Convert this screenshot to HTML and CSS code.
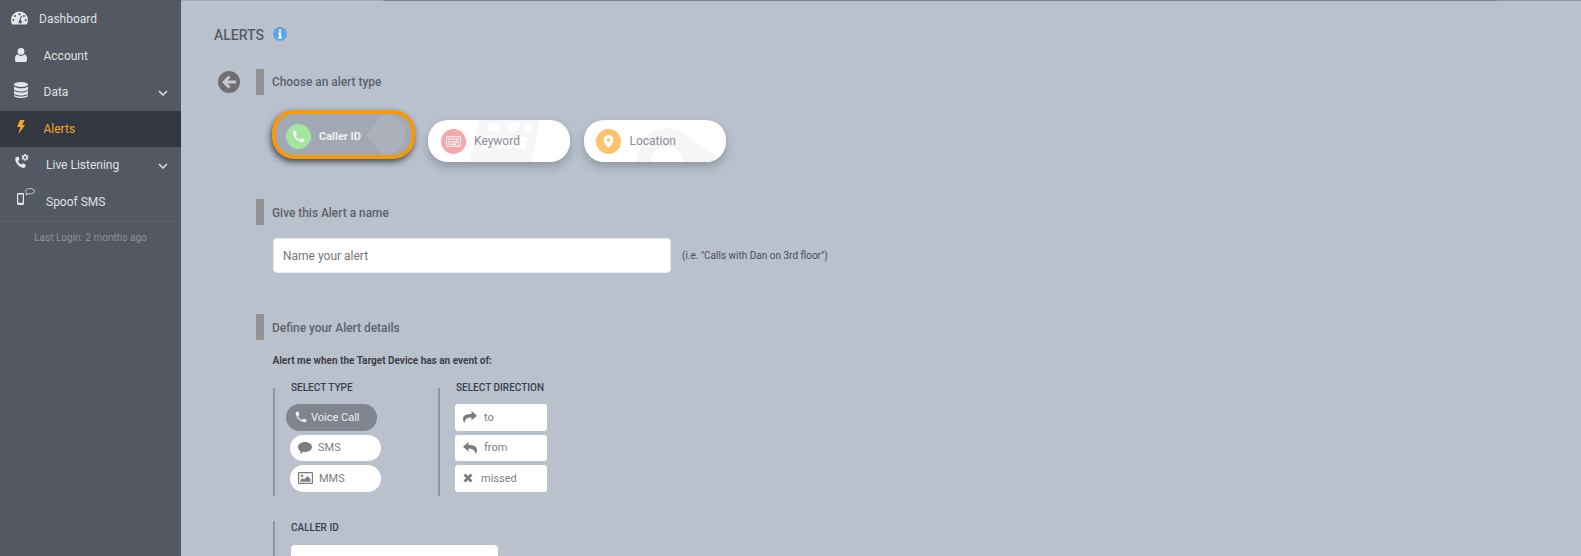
FILE: index.html
```html
<!DOCTYPE html>
<html lang="en">
	<head>
		<meta name="viewport" content="width=device-width, initial-scale=1.0" />
		<title>Alerts</title>
		<link rel="stylesheet" href="styles.css">
	</head>
	<body>
		<svg class="sprite" aria-hidden="true">
			<symbol id="i-phone" viewBox="0 0 24 24"><path d="M6.6 10.8c1.4 2.8 3.8 5.1 6.6 6.6l2.2-2.2c.3-.3.7-.4 1-.2 1.1.4 2.3.6 3.6.6.6 0 1 .4 1 1V20c0 .6-.4 1-1 1C10.6 21 3 13.4 3 4c0-.6.4-1 1-1h3.5c.6 0 1 .4 1 1 0 1.2.2 2.4.6 3.6.1.3 0 .7-.2 1z"/></symbol>
		</svg>

		<aside class="sidebar">
			<ul class="nav">
				<li class="nav-item -narrow">
					<svg class="nav-icon" viewBox="0 0 18 14"><path fill-rule="evenodd" d="M9 0a9 9 0 0 0-9 9c0 1.900.6 3.500 1.500 5h15c.9-1.500 1.500-3.100 1.500-5a9 9 0 0 0-9-9zM9 1.800a1.100 1.100 0 1 1 0 2.200 1.100 1.100 0 0 1 0-2.200zM4.300 3.700a1.100 1.100 0 1 1 0 2.200 1.100 1.100 0 0 1 0-2.200zM2.400 8a1.100 1.100 0 1 1 0 2.200 1.100 1.100 0 0 1 0-2.200zM15.600 8a1.100 1.100 0 1 1 0 2.200 1.100 1.100 0 0 1 0-2.200zM13.700 3.700a1.100 1.100 0 1 1 0 2.200 1.100 1.100 0 0 1 0-2.200zM11.500 4.800l-1.300 4.600a1.700 1.700 0 1 1-2.100 1.500 1.700 1.700 0 0 1 1-1.700l1.300-4.700z"/></svg>
					<span>Dashboard</span>
				</li>
				<li class="nav-item">
					<svg class="nav-icon -user" viewBox="0 0 12 14"><path d="M6 0a3.400 3.400 0 1 1 0 6.800A3.400 3.400 0 0 1 6 0zM2.600 6.600C3.500 7.500 4.700 8 6 8s2.500-.5 3.400-1.400C11 6.800 12 8 12 10.500V12c0 1.200-.8 2-2 2H2c-1.200 0-2-.8-2-2v-1.500C0 8 1 6.800 2.600 6.600z"/></svg>
					<span>Account</span>
				</li>
				<li class="nav-item">
					<svg class="nav-icon -data" viewBox="0 0 14 16"><ellipse cx="7" cy="2.500" rx="7" ry="2.500"/><path d="M0 4.300C1 5.700 4 6.300 7 6.300s6-.6 7-2V7c0 1.400-3.100 2.500-7 2.500S0 8.400 0 7zM0 8.500c1 1.400 4 2 7 2s6-.6 7-2v2.600c0 1.400-3.100 2.500-7 2.500s-7-1.100-7-2.500zM0 12.600c1 1.400 4 2 7 2s6-.6 7-2v.9C14 14.900 10.900 16 7 16s-7-1.100-7-2.500z"/></svg>
					<span>Data</span>
					<svg class="chevron" viewBox="0 0 10 6"><path d="M1 1l4 4 4-4" /></svg>
				</li>
				<li class="nav-item -active">
					<svg class="nav-icon -bolt" viewBox="0 0 8 14"><path d="M3 0h4.500L5.300 5H8L1.500 14l1.800-7H0z"/></svg>
					<span>Alerts</span>
				</li>
				<li class="nav-item -wide">
					<svg class="nav-icon -live" viewBox="0 0 15 15"><path d="M2.200 3.200l1.600-.6c.4-.1.700 0 .8.400l.8 2.200c.1.300 0 .6-.2.800l-1.100.9c.6 1.600 1.800 2.900 3.300 3.700l1.100-1c.3-.2.600-.3.900-.1l2 1.100c.3.200.4.500.3.900l-.6 1.600c-.3.700-1 1-1.700.9C5 12.900 1.400 9 1.200 4.900c0-.8.300-1.400 1-1.700z"/><path fill-rule="evenodd" d="M10.300 0h1.400l.2 1c.3.100.5.200.8.400l1-.4.700 1.200-.8.700c.1.300.1.600 0 .9l.8.700-.7 1.200-1-.4c-.3.200-.5.300-.8.400l-.2 1h-1.400l-.2-1c-.3-.1-.5-.2-.8-.4l-1 .4-.7-1.200.8-.7c-.1-.3-.1-.6 0-.9l-.8-.7.7-1.200 1 .4c.3-.2.5-.3.800-.4zM11 2.300a1.200 1.200 0 1 0 0 2.400 1.200 1.200 0 0 0 0-2.400z"/></svg>
					<span>Live Listening</span>
					<svg class="chevron" viewBox="0 0 10 6"><path d="M1 1l4 4 4-4" /></svg>
				</li>
				<li class="nav-item -wide">
					<svg class="nav-icon -spoof" viewBox="0 0 18 17"><path fill-rule="evenodd" d="M1.200 5h4.600c.7 0 1.200.5 1.200 1.200v9.600c0 .7-.5 1.200-1.200 1.200H1.200C.5 17 0 16.500 0 15.800V6.200C0 5.500.5 5 1.200 5zM1.200 6.500v8.200h4.600V6.500z"/><path class="bubble" d="M13 .5c2.300 0 4.500 1.100 4.500 2.700S15.300 5.900 13 5.900c-.6 0-1.200-.1-1.700-.2L9 7l.8-2C9 4.500 8.500 3.900 8.500 3.200 8.500 1.600 10.700.5 13 .5z"/></svg>
					<span>Spoof SMS</span>
				</li>
			</ul>
			<p class="last-login">Last Login: 2 months ago</p>
		</aside>

		<main class="content">
			<div class="page-title">
				<h1>ALERTS</h1>
				<svg class="info" viewBox="0 0 14 14"><circle cx="7" cy="7" r="7" fill="#5ba6e6"/><path fill="#fff" d="M6 2.500h2.200v2H6zM5.300 5.600h2.900v4.500h.8v1.400H5.200v-1.400h.9V7h-.8z"/></svg>
			</div>

			<div class="section-head -first">
				<svg class="back" viewBox="0 0 22 22"><circle cx="11" cy="11" r="11" fill="#6f6f6f"/><path fill="#c5cad3" d="M10.500 4.500l2 2-3 3H18v3H9.500l3 3-2 2L4 11z"/></svg>
				<span class="section-bar"></span>
				<h2>Choose an alert type</h2>
			</div>

			<div class="alert-types">
				<button type="button" class="alert-type -selected">
					<svg class="watermark -blob" viewBox="0 0 40 41"><path d="M17 0c13 0 22 8 22 20s-9 21-22 21L0 21z"/></svg>
					<span class="type-icon -green"><svg viewBox="0 0 24 24"><use href="#i-phone"/></svg></span>
					<span class="type-label">Caller ID</span>
				</button>
				<button type="button" class="alert-type">
					<svg class="watermark -keys" viewBox="0 0 80 42"><path fill-rule="evenodd" d="M9 0h61l-9 42H0zM19 3l-2 8h11l2-8zM38 3l-2 8h12l2-8zM55 3l-2 8h7l2-8zM16 17l-3 12h7l3-12zM30 17l-3 12h14l3-12zM49 17l-3 12h9l3-12z"/></svg>
					<span class="type-icon -red">
						<svg viewBox="0 0 20 14"><path fill-rule="evenodd" d="M1.500 0h17c.8 0 1.500.7 1.500 1.500v11c0 .8-.7 1.500-1.500 1.500h-17C.7 14 0 13.300 0 12.500v-11C0 .7.700 0 1.500 0zM1.200 1.200v11.600h17.600V1.200zM3 3h2v2H3zM6.500 3h2v2h-2zM10 3h2v2h-2zM13.500 3H17v2h-3.500zM3 6.200h3.500v2H3zM8 6.200h2v2H8zM11.500 6.200H17v2h-5.500zM3 9.500h2v1.800H3zM6.500 9.500h7v1.800h-7zM15 9.500h2v1.800h-2z"/></svg>
					</span>
					<span class="type-label">Keyword</span>
				</button>
				<button type="button" class="alert-type -location">
					<svg class="watermark -pin" viewBox="0 0 90 42"><path fill-rule="evenodd" d="M2 42C4 16 20 8 32 8c7 0 12 2 18 6l40 28H48c0-9-7-16-16-16s-16 7-16 16z"/></svg>
					<span class="type-icon -orange">
						<svg viewBox="0 0 12 16"><path fill-rule="evenodd" d="M6 0a6 6 0 0 1 6 6c0 3.500-4 8-6 10C4 14 0 9.500 0 6a6 6 0 0 1 6-6zM6 3.800a2.200 2.200 0 1 0 0 4.400 2.200 2.200 0 0 0 0-4.400z"/></svg>
					</span>
					<span class="type-label">Location</span>
				</button>
			</div>

			<div class="section-head -name">
				<span class="section-bar"></span>
				<h2>Give this Alert a name</h2>
			</div>

			<div class="name-row">
				<input class="text-input" placeholder="Name your alert" />
				<span class="hint">(i.e. "Calls with Dan on 3rd floor")</span>
			</div>

			<div class="section-head -details">
				<span class="section-bar"></span>
				<h2>Define your Alert details</h2>
			</div>

			<p class="lead">Alert me when the Target Device has an event of:</p>

			<div class="pickers">
				<section class="picker -type">
					<h3>SELECT TYPE</h3>
					<ul class="options">
						<li class="option -pill -on">
							<svg class="opt-icon -call" viewBox="0 0 24 24"><use href="#i-phone"/></svg>
							<span>Voice Call</span>
						</li>
						<li class="option -pill -shift">
							<svg class="opt-icon -sms" viewBox="0 0 14 12"><path d="M7 0c3.900 0 7 2.200 7 5s-3.100 5-7 5c-.6 0-1.200-.1-1.700-.2C4.200 10.800 2.800 11.600 1.500 12c.6-.8 1-1.700 1.100-2.800C1 8.300 0 6.800 0 5c0-2.800 3.100-5 7-5z"/></svg>
							<span>SMS</span>
						</li>
						<li class="option -pill -shift">
							<svg class="opt-icon -mms" viewBox="0 0 15 12"><path fill-rule="evenodd" d="M1 0h13c.6 0 1 .4 1 1v10c0 .6-.4 1-1 1H1c-.6 0-1-.4-1-1V1c0-.6.4-1 1-1zM1.200 1.200v9.600h12.600V1.200zM4 2.500a1.300 1.300 0 1 1 0 2.600 1.300 1.300 0 0 1 0-2.600zM2.500 9.800V8l2-2 1.500 1.500L9.500 4l3 3v2.800z"/></svg>
							<span>MMS</span>
						</li>
					</ul>
				</section>
				<section class="picker -direction">
					<h3>SELECT DIRECTION</h3>
					<ul class="options">
						<li class="option">
							<svg class="opt-icon -to" viewBox="0 0 14 12"><path d="M8.500 0L14 4.700 8.500 9.400V6.600C5 6.600 2.300 7.500 1.400 12 .4 10.600 0 9.400 0 8c0-3.800 3.600-5 8.500-5z"/></svg>
							<span>to</span>
						</li>
						<li class="option">
							<svg class="opt-icon -to" viewBox="0 0 14 12"><path d="M5.500 0L0 4.700l5.500 4.700V6.600c3.500 0 6.200.9 7.100 5.400 1-1.400 1.400-2.600 1.400-4 0-3.800-3.600-5-8.500-5z"/></svg>
							<span>from</span>
						</li>
						<li class="option">
							<svg class="opt-icon -x" viewBox="0 0 10 10"><path d="M2.500.5L5 3 7.500.5l2 2L7 5l2.500 2.500-2 2L5 7 2.500 9.500l-2-2L3 5 .5 2.500z"/></svg>
							<span>missed</span>
						</li>
					</ul>
				</section>
			</div>

			<section class="picker -caller">
				<h3>CALLER ID</h3>
				<input class="text-input -caller-input" />
			</section>
		</main>
	</body>
</html>
```

FILE: styles.css
```css
html,
body {
	height: 100%;
}

body {
	display: flex;
	margin: 0;
	overflow: hidden;
	color: #5d626c;
	background-color: #b9c1cd;
	font-family: Roboto, "Liberation Sans", sans-serif;
	font-size: 12px;
}

ul {
	margin: 0;
	padding: 0;
	list-style: none;
}

h1,
h2,
h3,
p {
	margin: 0;
}

input,
button {
	box-sizing: border-box;
	font: inherit;
}

.sprite {
	display: none;
}

/* sidebar */

.sidebar {
	flex: none;
	width: 181px;
	color: #dfe1e4;
	background-color: #535862;
}

.nav {
	padding: 1px 0 0.5px;
	border-bottom: 1px solid #5c616b;
}

.nav-item {
	display: flex;
	position: relative;
	align-items: center;
	height: 36.5px;
	padding-left: 43.5px;
}

.nav-item.-narrow {
	padding-left: 39px;
}

.nav-item.-wide {
	padding-left: 46px;
}

.nav-item.-active {
	color: #f5a623;
	background-color: #323742;
}

.nav-icon {
	position: absolute;
	left: 11px;
	top: 10px;
	width: 17px;
	height: 14px;
	fill: #e4e6e8;
}

.nav-icon.-user {
	left: 15px;
	top: 10px;
	width: 12px;
}

.nav-icon.-data {
	left: 14px;
	top: 8px;
	width: 14px;
	height: 16px;
}

.nav-icon.-bolt {
	left: 17px;
	top: 9px;
	width: 8px;
	fill: #f5a623;
}

.nav-icon.-live {
	left: 14px;
	top: 7px;
	width: 15px;
	height: 15px;
}

.nav-icon.-spoof {
	left: 17px;
	top: 4px;
	width: 18px;
	height: 17px;
}

.nav-icon .bubble {
	fill: none;
	stroke: #e4e6e8;
	stroke-width: 0.8;
}

.chevron {
	position: absolute;
	right: 13px;
	top: 16px;
	width: 10px;
	height: 6px;
	fill: none;
	stroke: #dfe1e4;
	stroke-width: 1.5;
}

.last-login {
	margin-top: 10px;
	color: #8f939b;
	font-size: 10px;
	text-align: center;
}

/* main column */

.content {
	flex: 1;
	min-width: 0;
	padding-top: 25px;
	background:
		linear-gradient(#a3aab6, #a3aab6) 0 0 / 202px 1px no-repeat,
		linear-gradient(#7d8491, #7d8491) 202px 0 / 1114px 1px no-repeat,
		linear-gradient(#8d94a1, #8d94a1) 1316px 0 / 84px 1px no-repeat;
}

.page-title {
	display: flex;
	align-items: center;
	height: 20px;
	margin-left: 33px;
}

.page-title h1 {
	color: #585c64;
	font-size: 14px;
	font-weight: 500;
}

.info {
	width: 14px;
	height: 14px;
	margin-top: -3px;
	margin-left: 9px;
}

.section-head {
	display: flex;
	align-items: center;
	height: 26px;
	margin-left: 75px;
}

.section-head.-first {
	margin-top: 24px;
}

.section-head.-name {
	margin-top: 37px;
}

.section-head.-details {
	margin-top: 41px;
}

.section-head h2 {
	margin-left: 8px;
	padding-top: 1px;
	font-size: 11.9px;
	font-weight: 500;
}

.section-head.-first h2 {
	padding-top: 0;
}

.section-bar {
	width: 8px;
	height: 26px;
	background-color: #929292;
}

.back {
	flex: none;
	width: 22px;
	height: 22px;
	margin-left: -38px;
	margin-right: 16px;
}

.alert-types {
	display: flex;
	align-items: flex-start;
	margin: 15px 0 0 91px;
}

.alert-type {
	display: flex;
	position: relative;
	align-items: center;
	overflow: hidden;
	width: 142px;
	height: 42px;
	margin: 10px 0 0 12px;
	padding: 0 0 0 13px;
	color: #8a8d93;
	background-color: #fff;
	border: none;
	border-radius: 20px;
	box-shadow: 0 5px 10px rgba(70, 76, 90, 0.35);
	text-align: left;
}

.alert-type.-location {
	margin-left: 13.5px;
	padding-left: 12px;
}

.alert-type.-selected {
	width: 143px;
	height: 49px;
	margin: 0 1px 0 0;
	padding: 4px 0 0 10px;
	color: #eef0f2;
	background-color: #a3a9b4;
	border: 4px solid #f79a0a;
	border-radius: 22px;
	font-size: 11px;
	font-weight: 700;
	box-shadow: -1px 3px 6px rgba(30, 34, 44, 0.75);
}

.alert-type.-selected .type-icon {
	margin-right: 8px;
}

.type-label {
	position: relative;
}

.type-icon {
	display: flex;
	position: relative;
	flex: none;
	align-items: center;
	justify-content: center;
	width: 25px;
	height: 25px;
	margin-right: 8px;
	border-radius: 50%;
	fill: #fff;
}

.alert-type.-location .type-icon {
	margin-right: 9px;
}

.type-icon svg {
	width: 15px;
	height: 15px;
}

.type-icon.-green {
	background-color: #a5e5a0;
}

.type-icon.-red {
	background-color: #f7a8aa;
}

.type-icon.-orange {
	background-color: #fcc36e;
}

.type-icon.-orange svg {
	height: 13px;
}

.watermark {
	position: absolute;
	bottom: 0;
	fill: #f6f6f7;
}

.watermark.-blob {
	left: 90px;
	width: 40px;
	height: 41px;
	fill: #abb0ba;
}

.watermark.-keys {
	left: 42px;
	width: 80px;
	height: 42px;
}

.watermark.-pin {
	left: 51px;
	width: 90px;
	height: 42px;
}

.name-row {
	display: flex;
	align-items: center;
	margin: 13px 0 0 92px;
}

.text-input {
	width: 398px;
	height: 35px;
	padding: 0 9px;
	background-color: #fff;
	border: 1px solid #e5e7ea;
	border-radius: 4px;
}

.text-input::placeholder {
	color: #757575;
}

.hint {
	margin-left: 11px;
	color: #4a4e57;
	font-size: 10px;
}

.lead {
	margin: 14px 0 0 91.5px;
	color: #3c404a;
	font-size: 10px;
	font-weight: 700;
	line-height: 14px;
}

.pickers {
	display: flex;
	margin: 20px 0 0 92px;
}

.picker {
	box-sizing: border-box;
	padding-left: 16px;
	border-left: 2px solid #8f96a2;
}

.picker.-type {
	width: 165px;
	height: 108px;
}

.picker.-caller {
	height: 100px;
	margin: 32px 0 0 92px;
}

.picker h3 {
	margin-top: -7px;
	color: #3a3f4a;
	font-size: 10px;
	font-weight: 500;
	line-height: 14px;
}

.options {
	display: flex;
	flex-direction: column;
	gap: 4px;
	width: 92px;
	margin: 9px 0 0 -1px;
}

.picker.-type .options {
	width: 91px;
	margin-left: -5px;
}

.option {
	display: flex;
	align-items: center;
	box-sizing: border-box;
	height: 26.5px;
	padding-left: 8px;
	color: #7d7d7d;
	background-color: #fff;
	border-radius: 3px;
	font-size: 11px;
	fill: #7d7d7d;
}

.option.-pill {
	border-radius: 14px;
}

.option.-shift {
	margin-right: -4px;
	margin-left: 4px;
}

.option.-on {
	color: #eef0f2;
	background-color: #7f848e;
	fill: #eef0f2;
}

.opt-icon {
	flex: none;
	margin-right: 6px;
}

.opt-icon.-call {
	width: 14px;
	height: 14px;
	margin-right: 3px;
}

.opt-icon.-sms {
	width: 14px;
	height: 12px;
}

.opt-icon.-mms {
	width: 15px;
	height: 12px;
}

.opt-icon.-to {
	width: 14px;
	height: 12px;
	margin-right: 7px;
}

.opt-icon.-x {
	width: 10px;
	height: 10px;
	margin-right: 8px;
}

.text-input.-caller-input {
	display: block;
	width: 207px;
	margin-top: 10px;
	border: none;
}
```
